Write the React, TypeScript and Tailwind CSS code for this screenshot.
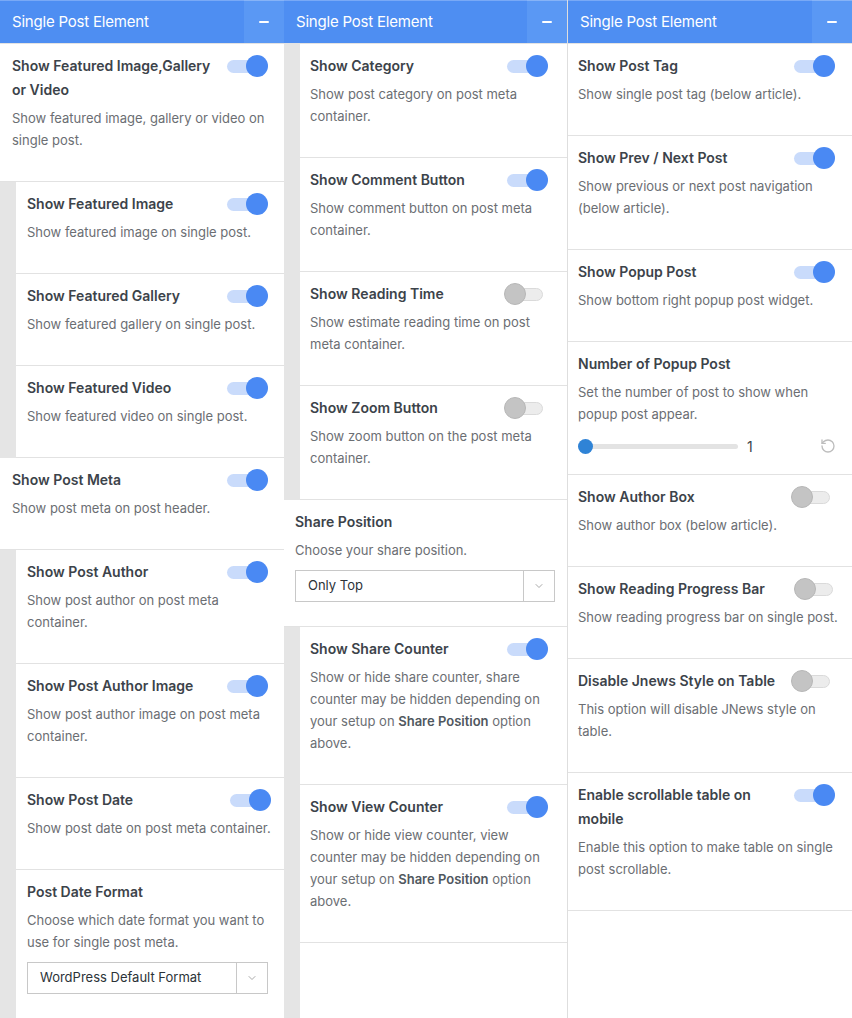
import React from "react";
import { ChevronDown, RotateCcw } from "lucide-react";

type Line = React.ReactNode;

function Toggle({ on }: { on: boolean }) {
  if (on) {
    return (
      <div className="relative w-[41px] h-[22px] flex-none">
        <div className="absolute left-0 top-[5px] w-[38px] h-[13px] rounded-full bg-[#c9dbfb]" />
        <div className="absolute right-0 top-0 w-[22px] h-[22px] rounded-full bg-[#4a89f3]" />
      </div>
    );
  }
  return (
    <div className="relative w-[39px] h-[22px] flex-none mr-[5px]">
      <div className="absolute right-0 top-[5px] w-[35px] h-[13px] rounded-full bg-[#ececec] border border-[#dadada]" />
      <div className="absolute left-0 top-0 w-[22px] h-[22px] rounded-full bg-[#c4c4c4] border border-[#b7b7b7]" />
    </div>
  );
}

function Header() {
  return (
    <div className="h-[44px] flex border-b border-[#e3e3e3] flex-none">
      <div className="flex-1 bg-[#4e8ef2] border-t border-[#79a9f6] flex items-center pl-[12px] text-white text-[15px] tracking-[-0.2px]">
        Single Post Element
      </div>
      <div className="w-[40px] bg-[#5a98f4] border-t border-[#86b3f7] flex items-center justify-center">
        <div className="w-[10px] h-[2px] bg-white rounded-sm" />
      </div>
    </div>
  );
}

function Lines({ lines, className }: { lines: Line[]; className: string }) {
  return (
    <div className={className}>
      {lines.map((l, i) => (
        <div key={i} className="whitespace-nowrap">
          {l}
        </div>
      ))}
    </div>
  );
}

function Select({ value }: { value: string }) {
  return (
    <div className="mt-[9px] h-[32px] flex border border-[#c8c8c8] bg-white">
      <div className="flex-1 flex items-center pl-[12px] text-[13px] text-[#2c3338]">{value}</div>
      <div className="w-[31px] border-l border-[#c8c8c8] flex items-center justify-center">
        <ChevronDown size={12} strokeWidth={1.5} color="#8c8c8c" />
      </div>
    </div>
  );
}

function Slider() {
  return (
    <div className="mt-[10px] h-[22px] flex items-center">
      <div className="relative w-[160px] h-[5px] rounded-full bg-[#e3e3e3]">
        <div className="absolute left-0 top-[-5px] w-[15px] h-[15px] rounded-full bg-[#2f83d6]" />
      </div>
      <div className="ml-[9px] text-[14px] text-[#3c434a]">1</div>
      <div className="flex-1" />
      <RotateCcw size={16} strokeWidth={2} color="#bdbdbd" />
    </div>
  );
}

type ItemProps = {
  title: Line[];
  desc: Line[];
  on?: boolean;
  select?: string;
  slider?: boolean;
  pad: string;
  indent?: boolean;
};

function Item({ title, desc, on, select, slider, pad, indent }: ItemProps) {
  const bottom = select ? "pb-[24px]" : slider ? "pb-[17px]" : "pb-[30px]";
  const body = (
    <div className={`flex-1 bg-white border-b border-[#e2e2e2] pt-[10px] ${bottom} ${pad}`}>
      <div className="flex items-start justify-between">
        <Lines
          lines={title}
          className="text-[14px] leading-[24px] font-semibold text-[#3c434a]"
        />
        {on !== undefined && (
          <div className="h-[24px] flex items-center">
            <Toggle on={on} />
          </div>
        )}
      </div>
      <Lines lines={desc} className="mt-[5px] text-[13px] leading-[22px] text-[#6b6e73]" />
      {select && <Select value={select} />}
      {slider && <Slider />}
    </div>
  );
  if (indent) {
    return (
      <div className="flex">
        <div className="w-[16px] bg-[#e5e5e5] flex-none" />
        {body}
      </div>
    );
  }
  return <div className="flex">{body}</div>;
}

function Filler({ indent }: { indent?: boolean }) {
  return (
    <div className="flex flex-1">
      {indent && <div className="w-[16px] bg-[#e5e5e5] flex-none" />}
      <div className="flex-1 bg-white" />
    </div>
  );
}

const B = ({ children }: { children: React.ReactNode }) => (
  <span className="font-semibold text-[#50575e]">{children}</span>
);

export default function App() {
  const c1full = "pl-[12px] pr-[16px]";
  const c1sub = "pl-[11px] pr-[16px]";
  const c2sub = "pl-[10px] pr-[19px]";
  const c2full = "pl-[11px] pr-[12px]";
  const c3 = "pl-[10px] pr-[17px]";
  return (
    <div
      className="w-[852px] h-[1018px] flex bg-white overflow-hidden"
      style={{ fontFamily: "Inter, 'Noto Sans', sans-serif" }}
    >
      {/* Column 1 */}
      <div className="w-[284px] flex flex-col flex-none">
        <Header />
        <Item
          title={["Show Featured Image,Gallery", "or Video"]}
          desc={["Show featured image, gallery or video on", "single post."]}
          on={true}
          pad={c1full}
        />
        <Item indent title={["Show Featured Image"]} desc={["Show featured image on single post."]} on pad={c1sub} />
        <Item indent title={["Show Featured Gallery"]} desc={["Show featured gallery on single post."]} on pad={c1sub} />
        <Item indent title={["Show Featured Video"]} desc={["Show featured video on single post."]} on pad={c1sub} />
        <Item title={["Show Post Meta"]} desc={["Show post meta on post header."]} on pad={c1full} />
        <Item indent title={["Show Post Author"]} desc={["Show post author on post meta", "container."]} on pad={c1sub} />
        <Item
          indent
          title={["Show Post Author Image"]}
          desc={["Show post author image on post meta", "container."]}
          on
          pad={c1sub}
        />
        <Item indent title={["Show Post Date"]} desc={["Show post date on post meta container."]} on pad={c1sub} />
        <Item
          indent
          title={["Post Date Format"]}
          desc={["Choose which date format you want to", "use for single post meta."]}
          select="WordPress Default Format"
          pad={c1sub}
        />
        <Filler indent />
      </div>

      {/* Column 2 */}
      <div className="w-[284px] flex flex-col flex-none border-r border-[#dedede]">
        <Header />
        <Item indent title={["Show Category"]} desc={["Show post category on post meta", "container."]} on pad={c2sub} />
        <Item
          indent
          title={["Show Comment Button"]}
          desc={["Show comment button on post meta", "container."]}
          on
          pad={c2sub}
        />
        <Item
          indent
          title={["Show Reading Time"]}
          desc={["Show estimate reading time on post", "meta container."]}
          on={false}
          pad={c2sub}
        />
        <Item
          indent
          title={["Show Zoom Button"]}
          desc={["Show zoom button on the post meta", "container."]}
          on={false}
          pad={c2sub}
        />
        <Item title={["Share Position"]} desc={["Choose your share position."]} select="Only Top" pad={c2full} />
        <Item
          indent
          title={["Show Share Counter"]}
          desc={[
            "Show or hide share counter, share",
            "counter may be hidden depending on",
            <>
              your setup on <B>Share Position</B> option
            </>,
            "above.",
          ]}
          on
          pad={c2sub}
        />
        <Item
          indent
          title={["Show View Counter"]}
          desc={[
            "Show or hide view counter, view",
            "counter may be hidden depending on",
            <>
              your setup on <B>Share Position</B> option
            </>,
            "above.",
          ]}
          on
          pad={c2sub}
        />
        <Filler indent />
      </div>

      {/* Column 3 */}
      <div className="w-[284px] flex flex-col flex-none">
        <Header />
        <Item title={["Show Post Tag"]} desc={["Show single post tag (below article)."]} on pad={c3} />
        <Item
          title={["Show Prev / Next Post"]}
          desc={["Show previous or next post navigation", "(below article)."]}
          on
          pad={c3}
        />
        <Item title={["Show Popup Post"]} desc={["Show bottom right popup post widget."]} on pad={c3} />
        <Item
          title={["Number of Popup Post"]}
          desc={["Set the number of post to show when", "popup post appear."]}
          slider
          pad="pl-[10px] pr-[16px]"
        />
        <Item title={["Show Author Box"]} desc={["Show author box (below article)."]} on={false} pad={c3} />
        <Item
          title={["Show Reading Progress Bar"]}
          desc={["Show reading progress bar on single post."]}
          on={false}
          pad={c3}
        />
        <Item
          title={["Disable Jnews Style on Table"]}
          desc={["This option will disable JNews style on", "table."]}
          on={false}
          pad={c3}
        />
        <Item
          title={["Enable scrollable table on", "mobile"]}
          desc={["Enable this option to make table on single", "post scrollable."]}
          on
          pad={c3}
        />
        <Filler />
      </div>
    </div>
  );
}
